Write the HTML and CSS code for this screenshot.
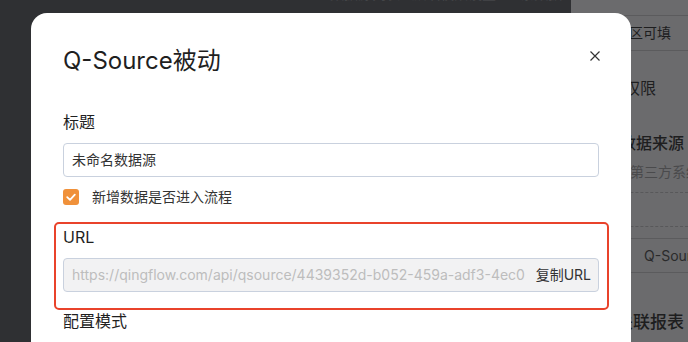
FILE: index.html
```html
<!DOCTYPE html>
<html lang="zh-CN">
<head>
<meta charset="utf-8">
<title>Q-Source被动</title>
<link rel="stylesheet" href="styles.css">
</head>
<body>
<div class="page">
  <div class="left">
    <div class="left-top">数据源列表 · 默认权限设置 · 2 条数据</div>
  </div>
  <div class="right">
    <div class="r-top"></div>
    <div class="r-row r-edit">编辑区可填</div>
    <div class="r-perm">字段权限</div>
    <div class="r-source">选择数据来源</div>
    <div class="r-sub">来自第三方系统</div>
    <div class="r-dash"></div>
    <div class="r-gap"></div>
    <div class="r-row r-item">Q-Source被动</div>
    <div class="r-report">关联报表</div>
  </div>
</div>

<div class="modal">
  <div class="modal-head">
    <div class="modal-title">Q-Source被动</div>
    <button class="close" aria-label="关闭">
      <svg width="10" height="10" viewBox="0 0 10 10"><path d="M0.5 0.5 L9.5 9.5 M9.5 0.5 L0.5 9.5" stroke="#333" stroke-width="1.2" fill="none"/></svg>
    </button>
  </div>
  <div class="modal-body">
    <div class="label">标题</div>
    <div class="input">未命名数据源</div>
    <div class="check-row">
      <span class="checkbox">
        <svg width="16" height="16" viewBox="0 0 16 16"><path d="M4.2 8.2 L7 10.8 L11.8 5.6" stroke="#fff" stroke-width="1.8" fill="none" stroke-linecap="round" stroke-linejoin="round"/></svg>
      </span>
      <span class="check-label">新增数据是否进入流程</span>
    </div>
    <div class="url-box">
      <div class="label url-label">URL</div>
      <div class="input input-disabled">
        <span class="url-text">https://qingflow.com/api/qsource/4439352d-b052-459a-adf3-4ec0</span>
        <span class="copy">复制URL</span>
      </div>
    </div>
    <div class="label">配置模式</div>
  </div>
</div>
</body>
</html>
```

FILE: styles.css
```css
html, body {
  margin: 0;
  padding: 0;
}
body {
  width: 688px;
  height: 342px;
  overflow: hidden;
  position: relative;
  font-family: "Inter", "Noto Sans CJK SC", sans-serif;
  color: #333;
}
.page {
  display: flex;
  height: 342px;
}
.left {
  width: 571px;
  background: #2f3033;
  overflow: hidden;
}
.left-top {
  margin-top: -14px;
  padding-left: 330px;
  font-size: 14px;
  line-height: 16px;
  color: #444548;
  white-space: nowrap;
}
.right {
  flex: 1;
  background: #6b6b6d;
  overflow: hidden;
  color: #1e1e1f;
  white-space: nowrap;
}
.r-top {
  height: 15px;
  border-bottom: 1px solid #5b5b5d;
}
.r-row {
  font-size: 14px;
  border-bottom: 1px solid #5b5b5d;
}
.r-edit {
  height: 34px;
  line-height: 34px;
  padding-left: 30px;
}
.r-perm {
  margin-top: 26px;
  font-size: 16px;
  line-height: 22px;
  padding-left: 21px;
}
.r-source {
  margin-top: 33px;
  font-size: 16px;
  line-height: 22px;
  padding-left: 17px;
  font-weight: 500;
}
.r-sub {
  margin-top: 8px;
  font-size: 14px;
  line-height: 20px;
  padding-left: 31px;
  color: #4a4a4c;
}
.r-dash {
  margin-top: 10px;
  height: 33px;
  border-top: 1px dashed #58585a;
  border-bottom: 1px dashed #58585a;
}
.r-gap {
  height: 11px;
  border-bottom: 1px solid #5b5b5d;
}
.r-item {
  height: 33px;
  line-height: 33px;
  padding-left: 73px;
  color: #2a2a2b;
}
.r-report {
  margin-top: 37px;
  font-size: 17px;
  line-height: 24px;
  padding-left: 45px;
  font-weight: 500;
}

.modal {
  position: absolute;
  left: 31px;
  top: 13px;
  width: 600px;
  height: 360px;
  background: #fff;
  border-radius: 16px 16px 0 0;
}
.modal-head {
  display: flex;
  justify-content: space-between;
  align-items: flex-start;
  padding: 32px 31px 0 32px;
}
.modal-title {
  font-size: 24px;
  line-height: 32px;
  color: #1f1f1f;
  font-weight: 400;
}
.close {
  border: 0;
  background: none;
  padding: 0;
  margin-top: 6px;
  width: 10px;
  height: 10px;
  display: flex;
}
.modal-body {
  padding: 34px 32px 0 32px;
}
.label {
  font-size: 16px;
  line-height: 22px;
  color: #1f1f1f;
}
.input {
  margin-top: 10px;
  box-sizing: border-box;
  height: 34px;
  border: 1px solid #c9d1de;
  border-radius: 4px;
  padding: 0 8px;
  font-size: 14px;
  line-height: 32px;
  color: #333;
  display: flex;
  white-space: nowrap;
}
.check-row {
  display: flex;
  align-items: center;
  margin-top: 12px;
  height: 16px;
}
.checkbox {
  width: 16px;
  height: 16px;
  border-radius: 3px;
  background: #f0913a;
  display: flex;
}
.check-label {
  margin-left: 13px;
  font-size: 14px;
  line-height: 16px;
  color: #333;
}
.url-box {
  margin: 17px -10px 0 -9px;
  border: 2px solid #e9432b;
  border-radius: 5px;
  padding: 2px 8px 16px 7px;
}
.url-label {
  line-height: 22px;
}
.input-disabled {
  margin-top: 10px;
  background: #f2f2f3;
  padding-right: 7px;
}
.url-text {
  flex: 1;
  min-width: 0;
  overflow: hidden;
  color: #bdbdbd;
}
.copy {
  margin-left: 4px;
  color: #333;
}
```
